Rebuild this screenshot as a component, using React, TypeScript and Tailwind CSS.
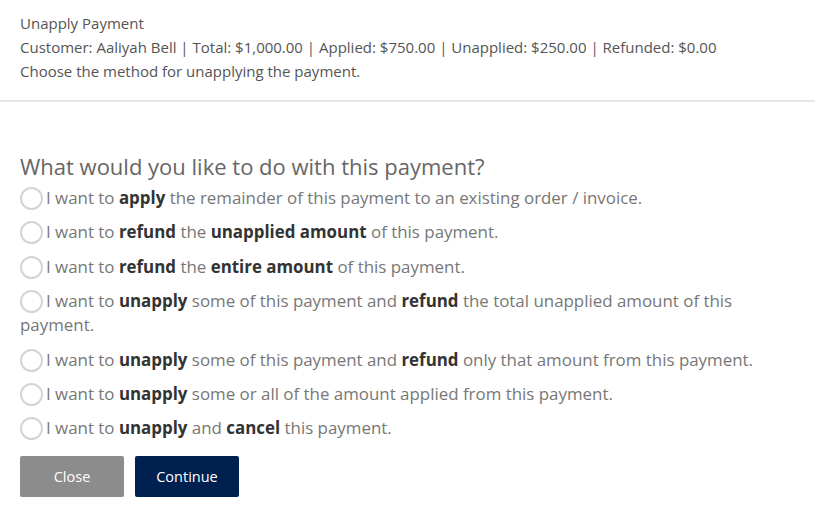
const options: { parts: [string, boolean][] }[] = [
  { parts: [["I want to ", false], ["apply", true], [" the remainder of this payment to an existing order / invoice.", false]] },
  { parts: [["I want to ", false], ["refund", true], [" the ", false], ["unapplied amount", true], [" of this payment.", false]] },
  { parts: [["I want to ", false], ["refund", true], [" the ", false], ["entire amount", true], [" of this payment.", false]] },
  {
    parts: [
      ["I want to ", false],
      ["unapply", true],
      [" some of this payment and ", false],
      ["refund", true],
      [" the total unapplied amount of this payment.", false],
    ],
  },
  {
    parts: [
      ["I want to ", false],
      ["unapply", true],
      [" some of this payment and ", false],
      ["refund", true],
      [" only that amount from this payment.", false],
    ],
  },
  { parts: [["I want to ", false], ["unapply", true], [" some or all of the amount applied from this payment.", false]] },
  { parts: [["I want to ", false], ["unapply", true], [" and ", false], ["cancel", true], [" this payment.", false]] },
];

export default function App() {
  return (
    <div className="min-h-screen bg-white font-['Open_Sans',sans-serif]">
      <div className="border-b-2 border-[#e6e6e6] px-5 pt-[11px] pb-[17px] text-[15px] leading-6 text-[#555]">
        <p>Unapply Payment</p>
        <p>Customer: Aaliyah Bell | Total: $1,000.00 | Applied: $750.00 | Unapplied: $250.00 | Refunded: $0.00</p>
        <p>Choose the method for unapplying the payment.</p>
      </div>

      <div className="px-5 pt-[50px]">
        <h2 className="text-[22px] leading-7 text-[#666]">What would you like to do with this payment?</h2>

        <div className="mt-[6px]">
          {options.map((opt, i) => (
            <label key={i} className="mb-[10.4px] block cursor-pointer text-[16.9px] leading-6 text-[#777]">
              <span className="mr-[3px] inline-block h-[23px] w-[23px] rounded-full border-2 border-[#d4d4d4] align-[-6px]" />
              {opt.parts.map(([t, b], j) =>
                b ? (
                  <b key={j} className="font-bold text-[#333]">
                    {t}
                  </b>
                ) : (
                  <span key={j}>{t}</span>
                ),
              )}
            </label>
          ))}
        </div>

        <div className="mt-[16px] flex gap-[11px]">
          <button className="h-[41px] w-[104px] rounded-[2px] bg-[#8c8c8c] text-[14.5px] text-white">Close</button>
          <button className="h-[41px] w-[104px] rounded-[2px] bg-[#00204f] text-[14.5px] text-white">Continue</button>
        </div>
      </div>
    </div>
  );
}
